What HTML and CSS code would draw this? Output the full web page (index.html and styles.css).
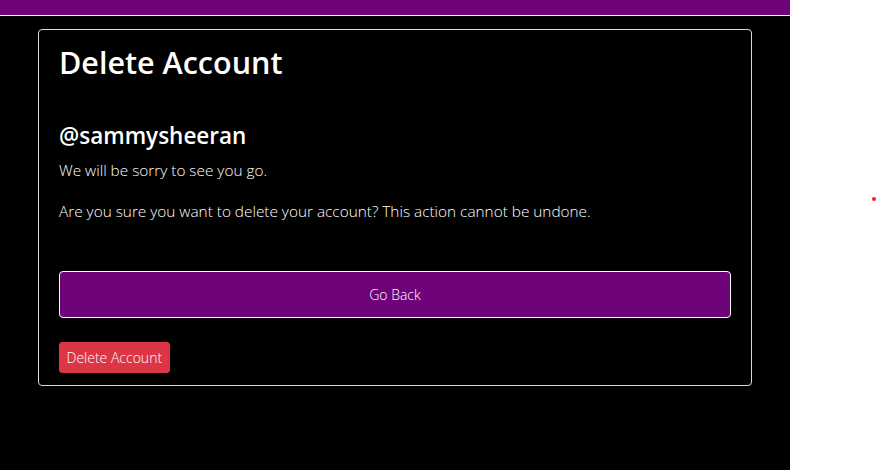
FILE: index.html
```html
<!DOCTYPE html>
<html lang="en">
<head>
<meta charset="utf-8">
<title>Delete Account</title>
<link rel="stylesheet" href="styles.css">
</head>
<body>
<div class="page">
  <header class="topbar"></header>
  <main class="card">
    <h1 class="title">Delete Account</h1>
    <h2 class="username">@sammysheeran</h2>
    <p class="text first">We will be sorry to see you go.</p>
    <p class="text second">Are you sure you want to delete your account? This action cannot be undone.</p>
    <button class="btn btn-back" type="button">Go Back</button>
    <button class="btn btn-delete" type="button">Delete Account</button>
  </main>
</div>
<span class="dot"></span>
</body>
</html>
```
FILE: styles.css
```css
html, body {
  margin: 0;
  padding: 0;
  background: #ffffff;
}
body {
  font-family: "Open Sans", "Noto Sans", sans-serif;
  color: #ffffff;
}
.page {
  width: 790px;
  min-height: 470px;
  background: #000000;
  display: flex;
  flex-direction: column;
}
.topbar {
  height: 15px;
  background: #6f0379;
  border-bottom: 1px solid #ffffff;
}
.card {
  margin: 13px 38px 0;
  border: 1px solid #d9d9d9;
  border-radius: 4px;
  padding: 14px 20px 12px;
  display: flex;
  flex-direction: column;
  align-items: flex-start;
}
.title {
  margin: 0;
  font-size: 30.5px;
  line-height: 36px;
  font-weight: 600;
}
.username {
  margin: 41px 0 0;
  font-size: 22.5px;
  line-height: 29px;
  font-weight: 600;
}
.text {
  margin: 0;
  font-size: 15.35px;
  line-height: 24px;
  font-weight: 300;
}
.text.first { margin-top: 8px; }
.text.second { margin-top: 17px; }
.btn {
  font-family: inherit;
  font-weight: 300;
  font-size: 14px;
  color: #ffffff;
  cursor: pointer;
}
.btn-back {
  align-self: stretch;
  margin-top: 48px;
  height: 47px;
  background: #6f0379;
  border: 1px solid #ffffff;
  border-radius: 4px;
}
.btn-delete {
  margin-top: 24px;
  height: 31px;
  padding: 0 6.5px;
  background: #dc3545;
  border: 1px solid #dc3545;
  border-radius: 3px;
}
.dot {
  position: absolute;
  left: 872px;
  top: 197px;
  width: 4px;
  height: 4px;
  border-radius: 50%;
  background: #ff1a1a;
}
```
